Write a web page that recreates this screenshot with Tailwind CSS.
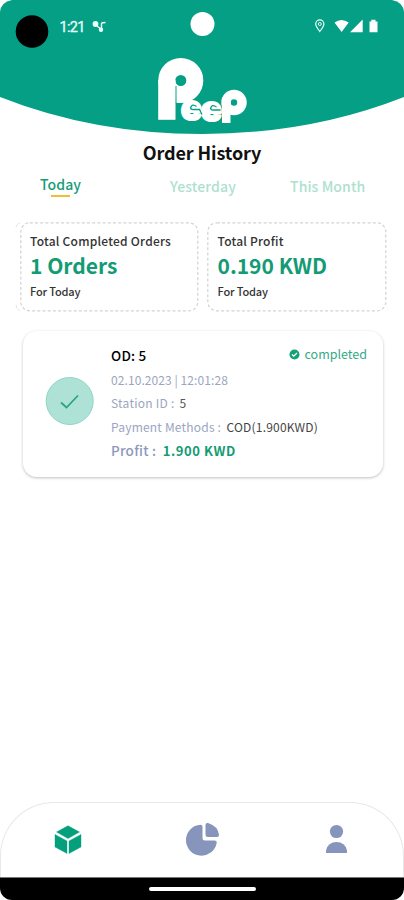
<!DOCTYPE html>
<html lang="en">
<head>
<meta charset="utf-8">
<title>Order History</title>
<script src="https://cdn.jsdelivr.net/npm/@tailwindcss/browser@4"></script>
</head>
<body class="bg-white">
<div class="w-[404px] h-[900px] flex flex-col overflow-hidden bg-white text-[#333] font-['Noto_Sans_CJK_SC','Noto_Sans',sans-serif] whitespace-nowrap">
  <header class="h-[138px] shrink-0">
    <svg width="404" height="138" viewBox="0 0 404 138">
      <path d="M0 12Q1 2 12 0H392Q403 2 404 12V97Q310 134 202 134Q94 134 0 97Z" fill="#049f84"/>
      <circle cx="32" cy="31.500" r="16.300"/>
      <circle cx="202.500" cy="24" r="12" fill="#fff"/>
      <text x="59.500" y="32" font-family="Roboto" font-size="14.500" fill="#e9fffa" stroke="#e9fffa" stroke-width=".3" textLength="26">1:21</text>
      <g fill="#e9fffa"><circle cx="95.500" cy="24" r="2.900"/><circle cx="101" cy="29.800" r="2.200"/><path d="M97 26l4 3M101.500 29V23.500Q102 22.500 105.500 22.500" fill="none" stroke="#e9fffa" stroke-width="1.400"/></g>
      <path d="M319.800 31.500C317 28 315.700 26 315.700 24a4.100 4.100 0 0 1 8.200 0C323.900 26 322.600 28 319.800 31.500Z" fill="none" stroke="#e9fffa" stroke-width="1.200"/>
      <circle cx="319.800" cy="24" r="1.500" fill="none" stroke="#e9fffa"/>
      <path d="M334.500 22.500Q341.500 17.500 348.700 22.500L341.600 32Z M350 32.300L362.700 19.500V32.300Z M369.500 21.500h1.800v-1.800h4.200v1.800h2v10.800h-8z" fill="#fff"/>
      <g fill="#fff" stroke="#fff" font-family="Inter,sans-serif" font-weight="900">
        <rect x="158.200" y="80" width="17.300" height="39.800" stroke="none"/>
        <circle cx="180.800" cy="80.500" r="14" fill="none" stroke-width="17"/>
        <rect x="177" y="86" width="4" height="17" stroke="none"/>
        <text x="181" y="120" font-size="34" stroke-width="2.200" stroke-linejoin="round">e</text>
        <text x="201" y="120.500" font-size="34" stroke-width="2.200" stroke-linejoin="round">e</text>
        <rect x="222" y="101" width="8.500" height="22" stroke="none"/>
        <circle cx="234" cy="102.500" r="8" fill="none" stroke-width="9.500"/>
      </g>
      <path d="M176 86V103" stroke="#049f84" stroke-width="1"/>
      <g fill="none" stroke="#049f84" stroke-width="1.300"><path d="M196.500 106.500Q192 103 190.500 108Q191 110 194 109.500H199.500L202 114.500"/><path d="M216.500 107Q212 103.500 210.500 108.500Q211 110.500 214 110H220.500"/></g>
    </svg>
  </header>
  <h1 class="h-7 shrink-0 text-center text-[18px] leading-[29px] font-bold tracking-[-0.1px] text-[#111]">Order History</h1>
  <nav class="h-[56px] shrink-0 flex text-[14px] font-medium text-[#aee0d0]">
    <div class="w-[130px] pl-[40px] pt-[8px] text-[#159b78]">
      <div class="leading-[20px] tracking-[0.1px]">Today</div>
      <div class="ml-[11px] mt-[1px] w-[19px] h-[2px] bg-[#f2bd35]"></div>
    </div>
    <div class="w-[160px] pl-[40px] pt-[10px] leading-[20px] tracking-[0.15px]">Yesterday</div>
    <div class="pt-[10px] leading-[20px] tracking-[0.1px]">This Month</div>
  </nav>
  <section class="h-[90px] shrink-0 flex pl-[15px]">
    <svg width="5" height="90" fill="none" stroke="#ddd"><path d="M1 5Q2 2 5 1M1 83Q2 87 5 89" stroke-dasharray="3 1"/></svg>
    <div class="grid w-[179px] mr-[8px]">
      <svg class="col-start-1 row-start-1" width="179" height="90"><rect x=".8" y=".8" width="177" height="88" rx="9" fill="none" stroke="#d3d3d3" stroke-width="1.200" stroke-dasharray="3 2.200"/></svg>
      <div class="col-start-1 row-start-1 pl-[10px] pt-[9px]">
        <div class="h-5 leading-5 text-[12px] font-medium tracking-[0.24px]">Total Completed Orders</div>
        <div class="h-[28px] leading-[29px] text-[21px] font-bold text-[#139b75]">1 Orders</div>
        <div class="h-5 leading-[24px] text-[11px] font-medium tracking-[-0.15px]">For Today</div>
      </div>
    </div>
    <div class="grid w-[180px]">
      <svg class="col-start-1 row-start-1" width="180" height="90"><rect x=".8" y=".8" width="178" height="88" rx="9" fill="none" stroke="#d3d3d3" stroke-width="1.200" stroke-dasharray="3 2.200"/></svg>
      <div class="col-start-1 row-start-1 pl-[10.500px] pt-[9px]">
        <div class="h-5 leading-5 text-[12px] font-medium tracking-[0.24px]">Total Profit</div>
        <div class="h-[28px] leading-[29px] text-[21px] font-bold text-[#139b75]">0.190 KWD</div>
        <div class="h-5 leading-[24px] text-[11px] font-medium tracking-[-0.15px]">For Today</div>
      </div>
    </div>
  </section>
  <article class="mt-[19px] ml-[23px] w-[360px] h-[146px] shrink-0 rounded-[14px] bg-white shadow-[0_1px_3px_rgba(0,0,0,0.25)] flex">
    <svg class="mt-[45px] ml-[22px] mr-[17px]" width="50" height="50"><circle cx="24.700" cy="25" r="23.500" fill="#afe2d7" stroke="#8fd5c3"/><path d="M16 26.500L21.500 31.500L33 19.500" fill="none" stroke="#2ba380" stroke-width="1.700"/></svg>
    <div class="flex-1 pt-[13px] -ml-px text-[12px] text-[#9ba5c1]">
      <div class="flex items-center h-[22px] pr-[16px]">
        <span class="text-[13.5px] font-medium text-black tracking-[0.2px]">OD: 5</span>
        <svg class="ml-auto mr-[4px]" width="12" height="12"><circle cx="6.500" cy="5.500" r="5" fill="#16a077"/><path d="M4 5.500L5.800 7.200L9 4" stroke="#fff" fill="none" stroke-width="1.200"/></svg>
        <span class="text-[12.500px] leading-[18px] pb-[2px] text-[#35aa87]">completed</span>
      </div>
      <div class="h-[26px] leading-[28px] tracking-[0.08px]">02.10.2023 | 12:01:28</div>
      <div class="h-[23px] leading-[22px] tracking-[0.25px]">Station ID : <span class="text-[#555] ml-[2px]">5</span></div>
      <div class="h-[23px] leading-[23px] tracking-[0.2px]">Payment Methods : <span class="text-[#444] ml-[2.500px]">COD(1.900KWD)</span></div>
      <div class="h-[25px] leading-[25px] text-[13.5px] font-medium tracking-[0.25px] text-[#8d98bd]">Profit : <span class="text-[13px] font-bold tracking-[0.6px] text-[#159b74] ml-[3px]">1.900 KWD</span></div>
    </div>
  </article>
  <footer class="mt-auto h-[98px] shrink-0 flex flex-col">
    <div class="h-[75px] rounded-t-[54px] border border-b-0 border-[#e8e8e8] flex justify-between px-[52px]">
      <svg class="mt-[20px]" width="30" height="32" fill="#049f7d"><path d="M15 2.700L26.500 9L15 15.600L3.500 9ZM2 11.400L14 18V30.500L2 24ZM28 11.400L16 18V30.500L28 24Z" stroke="#049f7d" stroke-width=".4" stroke-linejoin="round"/></svg>
      <svg class="mt-[17px] ml-[3px]" width="38" height="38" fill="#8795bc"><path d="M15.500 4.700Q17.500 4.700 17.500 7V18Q17.500 20.500 20 20.500H29.500Q32 20.500 31.700 23A15.500 15.500 0 1 1 15.500 4.700Z"/><path d="M20.500 5Q20.500 2.500 23 3Q33 6 34 15Q34 17 32 17H23Q20.500 17 20.500 14.500Z"/></svg>
      <svg class="mt-[20px]" width="30" height="32" fill="#8795bc"><circle cx="15.500" cy="8.500" r="6.600"/><path d="M5 30V27.500Q7 19 15.500 19Q24 19 26 27.500V30Z"/></svg>
    </div>
    <div class="h-[23px] bg-white"><div class="h-full bg-black rounded-b-[12px] border-t border-[#777] flex justify-center"><div class="mt-[9px] w-[107px] h-[4px] rounded-full bg-white"></div></div></div>
  </footer>
</div>
</body>
</html>
